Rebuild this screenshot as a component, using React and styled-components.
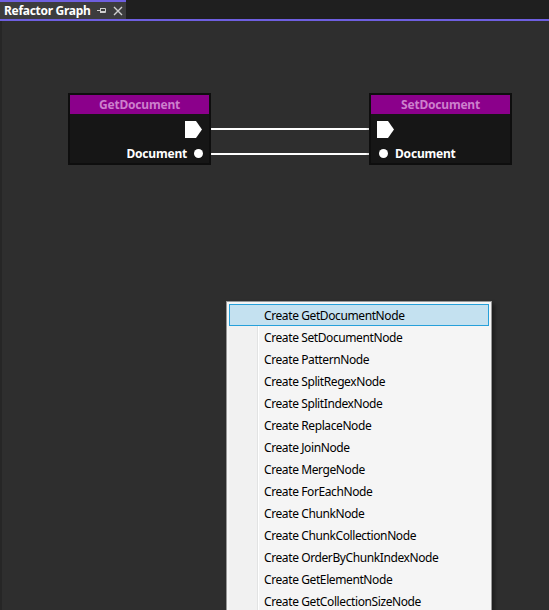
import React from 'react';
import { styled, createGlobalStyle } from 'styled-components';

const Global = createGlobalStyle`
  html, body { margin: 0; padding: 0; background: #2d2d2d; }
  body { font-family: "Noto Sans", "Open Sans", sans-serif; overflow: hidden; }
`;

const Window = styled.div`
  width: 549px;
  height: 610px;
  display: flex;
  flex-direction: column;
  background: #2d2d2d;
  overflow: hidden;
`;

const TabStrip = styled.div`
  height: 19px;
  display: flex;
  background: #1f1f1f;
  border-bottom: 2px solid #6e5fe0;
`;

const Tab = styled.div`
  width: 126px;
  display: flex;
  align-items: center;
  gap: 7px;
  padding-left: 4px;
  box-sizing: border-box;
  background: #3c3c3e;
  border-top: 2px solid #6e5fe0;
  color: #ffffff;
  font-weight: bold;
  font-size: 12px;
  letter-spacing: -0.3px;
`;

const TabIcon = styled.svg`
  flex: none;
  display: block;
`;

const Canvas = styled.div`
  position: relative;
  flex: 1;
  background: #2e2e2e;
  border-left: 2px solid #262626;
`;

const Node = styled.div`
  position: absolute;
  left: ${({ x }) => x}px;
  top: ${({ y }) => y}px;
  width: 143px;
  height: 72px;
  box-sizing: border-box;
  border: 2px solid #0e0e0e;
  background: #161616;
  display: flex;
  flex-direction: column;
`;

const NodeTitle = styled.div`
  height: 19px;
  background: #8b008b;
  color: #cd7fcd;
  font-weight: bold;
  font-size: 12px;
  display: flex;
  align-items: center;
  justify-content: center;
  letter-spacing: -0.2px;
`;

const PinRow = styled.div`
  height: ${({ h }) => h}px;
  display: flex;
  align-items: center;
  justify-content: ${({ side }) => (side === 'out' ? 'flex-end' : 'flex-start')};
  gap: 7px;
  padding: ${({ side }) => (side === 'out' ? '0 6px 0 0' : '0 0 0 6px')};
  color: #ffffff;
  font-weight: bold;
  font-size: 12px;
  letter-spacing: -0.2px;
`;

const Wires = styled.svg`
  position: absolute;
  left: 0;
  top: 0;
`;

const Menu = styled.div`
  position: absolute;
  left: 224px;
  top: 280px;
  width: 266px;
  box-sizing: border-box;
  border: 1px solid #979797;
  background: #f5f5f5;
  padding: 2px;
  box-shadow: 3px 3px 4px rgba(0, 0, 0, 0.35);
  font-family: "Noto Sans", "Open Sans", sans-serif;
  font-size: 12px;
  color: #000;
  background-image: linear-gradient(to right, #f1f1f1 0, #f1f1f1 28px, #e2e3e3 28px, #e2e3e3 29px, #ffffff 29px, #ffffff 30px, #f5f5f5 30px);
  background-origin: content-box;
  background-repeat: no-repeat;
`;

const MenuItem = styled.div`
  height: 22px;
  box-sizing: border-box;
  display: flex;
  align-items: center;
  padding-left: 34px;
  border: 1px solid ${({ active }) => (active ? '#26a0da' : 'transparent')};
  background: ${({ active }) => (active ? '#c4e1f0' : 'transparent')};
  letter-spacing: -0.4px;
`;

const ExecPin = () => (
  <svg width="17" height="17" viewBox="0 0 17 17">
    <polygon points="0,0 11,0 17,8.5 11,17 0,17" fill="#ffffff" />
  </svg>
);

const DataPin = () => (
  <svg width="9" height="9" viewBox="0 0 9 9">
    <circle cx="4.5" cy="4.5" r="4.5" fill="#ffffff" />
  </svg>
);

const items = [
  'Create GetDocumentNode',
  'Create SetDocumentNode',
  'Create PatternNode',
  'Create SplitRegexNode',
  'Create SplitIndexNode',
  'Create ReplaceNode',
  'Create JoinNode',
  'Create MergeNode',
  'Create ForEachNode',
  'Create ChunkNode',
  'Create ChunkCollectionNode',
  'Create OrderByChunkIndexNode',
  'Create GetElementNode',
  'Create GetCollectionSizeNode',
];

const App = () => (
  <Window>
    <Global />
    <TabStrip>
      <Tab>
        <span>Refactor Graph</span>
        <TabIcon width="9" height="7" viewBox="0 0 9 7">
          <path d="M0 3.5h3M3.5 1v5M3.5 1.5h5v4h-5M3.5 4.5h5" stroke="#d0d0d0" strokeWidth="1" fill="none" />
        </TabIcon>
        <TabIcon width="10" height="10" viewBox="0 0 10 10">
          <path d="M1 1l8 8M9 1l-8 8" stroke="#d0d0d0" strokeWidth="1.4" />
        </TabIcon>
      </Tab>
    </TabStrip>
    <Canvas>
      <Wires width="549" height="200">
        <defs>
          <linearGradient id="wire" x1="0" x2="1" y1="0" y2="0">
            <stop offset="0" stopColor="#777" />
            <stop offset="0.06" stopColor="#fff" />
            <stop offset="0.94" stopColor="#fff" />
            <stop offset="1" stopColor="#777" />
          </linearGradient>
        </defs>
        <rect x="200" y="107" width="174" height="2" fill="url(#wire)" />
        <rect x="200" y="132" width="174" height="2" fill="url(#wire)" />
      </Wires>
      <Node x={66} y={72}>
        <NodeTitle>GetDocument</NodeTitle>
        <PinRow side="out" h={30}>
          <span style={{ display: 'flex', marginRight: 1 }}><ExecPin /></span>
        </PinRow>
        <PinRow side="out" h={19}>
          <span>Document</span>
          <DataPin />
        </PinRow>
      </Node>
      <Node x={367} y={72}>
        <NodeTitle>SetDocument</NodeTitle>
        <PinRow side="in" h={30}>
          <ExecPin />
        </PinRow>
        <PinRow side="in" h={19}>
          <span style={{ display: 'flex', marginLeft: 2 }}><DataPin /></span>
          <span>Document</span>
        </PinRow>
      </Node>
      <Menu>
        {items.map((t, i) => (
          <MenuItem key={t} active={i === 0}>{t}</MenuItem>
        ))}
      </Menu>
    </Canvas>
  </Window>
);

export default App;
